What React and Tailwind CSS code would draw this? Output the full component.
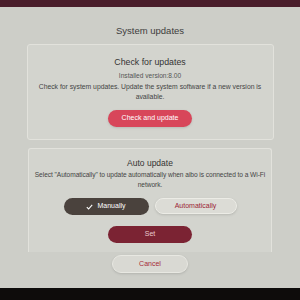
import React from 'react';

export default function App() {
  return (
    <div className="w-[300px] h-[300px] overflow-hidden bg-black flex flex-col font-['Liberation_Sans',Arial,sans-serif]">
      <div className="h-[7px] bg-[#4a1e2b]" />
      <div className="h-[281px] bg-[#cdcec8] flex flex-col items-center">
        <h1 className="mt-[17px] text-[9.5px] leading-[13px] text-[#3d3d3d]">System updates</h1>

        {/* Check for updates */}
        <div className="mt-[7px] w-[247px] h-[96px] border border-[#e2e2dc] rounded-[3px] bg-[#d3d4ce] flex flex-col items-center">
          <h2 className="mt-[11px] text-[8.8px] leading-[13px] text-[#333]">Check for updates</h2>
          <p className="mt-[2px] text-[6.6px] leading-[9px] text-[#555]">Installed version:8.00</p>
          <p className="mt-[2px] px-[8px] text-[6.8px] leading-[10px] text-center text-[#444]">
            Check for system updates. Update the system software if a new version is available.
          </p>
          <button className="mt-[8px] w-[84px] h-[17px] rounded-full bg-[#d8465a] text-white text-[7px] shadow-sm">
            Check and update
          </button>
        </div>

        {/* Auto update */}
        <div className="mt-[8px] w-[244px] h-[104px] border border-[#e2e2dc] border-b-0 rounded-t-[3px] bg-[#d3d4ce] flex flex-col items-center">
          <h2 className="mt-[8px] text-[8.5px] leading-[12px] text-[#333]">Auto update</h2>
          <p className="mt-[1px] text-[6.6px] leading-[10px] text-center text-[#444] tracking-[-0.05px]">
            <span className="whitespace-nowrap">Select "Automatically" to update automatically when aibo is connected to a Wi-Fi</span>
            <br />
            network.
          </p>
          <div className="mt-[8px] flex gap-[6px]">
            <button className="w-[85px] h-[17px] rounded-full bg-[#4a423d] text-white text-[7px] flex items-center justify-center gap-[4px]">
              <svg width="7" height="6" viewBox="0 0 7 6" fill="none">
                <path d="M0.8 3.2 L2.6 5 L6.2 0.8" stroke="white" strokeWidth="1.1" />
              </svg>
              Manually
            </button>
            <button className="w-[82px] h-[16px] rounded-full bg-[#dcdcd6] border border-[#ecece6] text-[#9b2535] text-[7px] shadow-sm">
              Automatically
            </button>
          </div>
          <button className="mt-[11px] w-[84px] h-[17px] rounded-full bg-[#7b2333] text-[#e9c9cd] text-[7px]">
            Set
          </button>
        </div>

        <button className="mt-[3px] w-[76px] h-[18px] rounded-full bg-[#d9d9d3] border border-[#e8e8e2] text-[#a62a3a] text-[7px] shadow-sm">
          Cancel
        </button>
      </div>
      <div className="flex-1 bg-[#0e0c0b]" />
    </div>
  );
}
